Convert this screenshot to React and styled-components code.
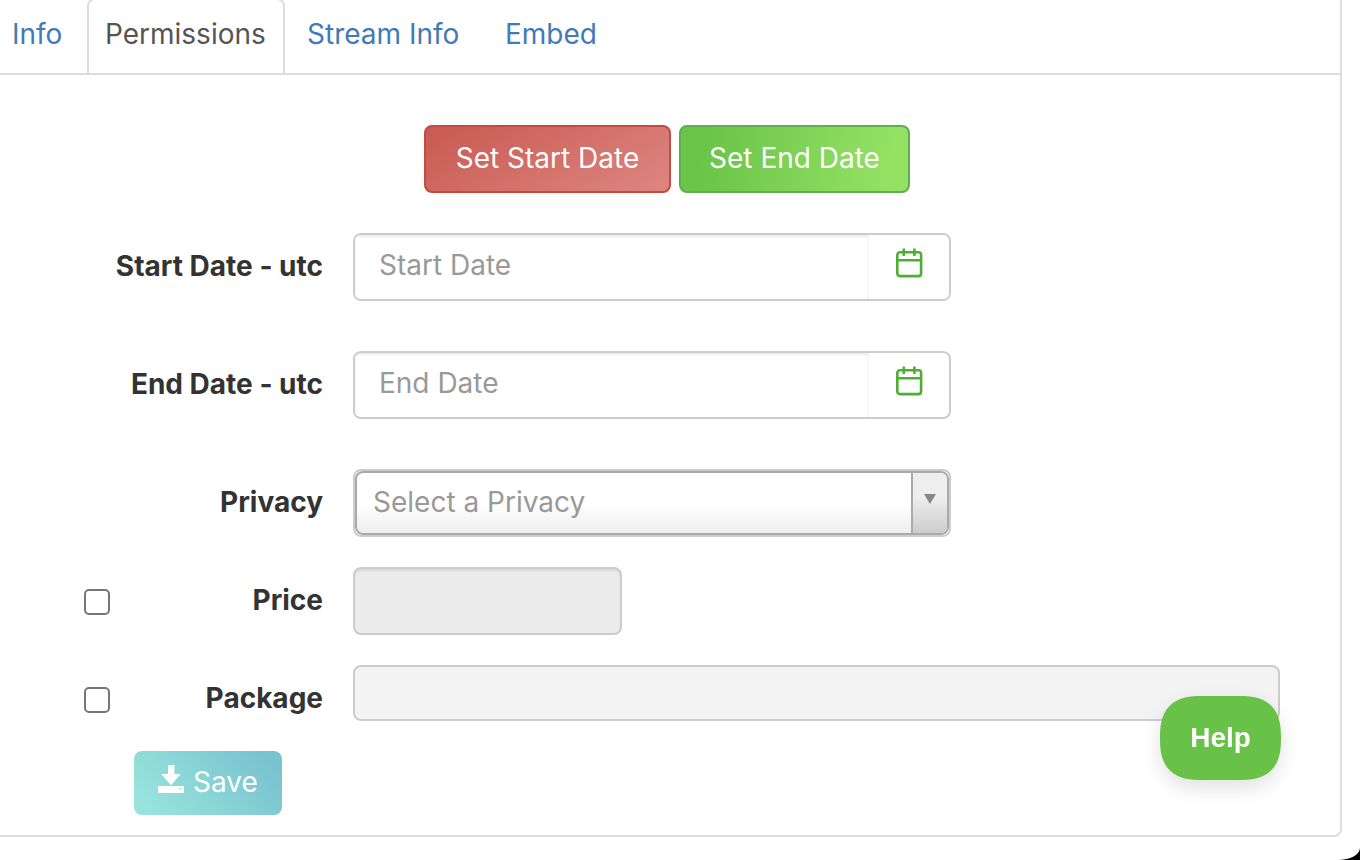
import React from "react";
import styled, { createGlobalStyle, css } from "styled-components";

const GlobalStyle = createGlobalStyle`
  *, *::before, *::after { box-sizing: border-box; }
  html { background: #000; }
  body {
    margin: 0;
    color: #333;
    font-family: Inter, "Open Sans", sans-serif;
    font-size: 28px;
    line-height: 40px;
  }
  button, input, select { font: inherit; color: inherit; margin: 0; }
`;

const Page = styled.div`
  min-height: 100vh;
  overflow: hidden;
  background: #fff;
  border-bottom-right-radius: 22px 12px;
`;

const Panel = styled.main`
  margin-right: 18px;
  border: solid #ddd;
  border-width: 0 2px 2px 0;
  border-bottom-right-radius: 8px;
`;

const Tabs = styled.nav`
  display: flex;
  gap: 4px;
  margin-top: -2px;
  border-bottom: 2px solid #ddd;
`;

const Tab = styled.a`
  display: block;
  min-width: ${(p) => p.$minWidth}px;
  padding: 14px 16px 19px;
  border: 2px solid transparent;
  border-bottom: 0;
  border-radius: 8px 8px 0 0;
  color: #4279b7;
  text-decoration: none;
  &:first-child { padding-left: 10px; }
  ${(p) => p.$active && css`
    color: #555;
    background: #fff;
    border-color: #ddd;
  `}
`;

const Form = styled.form`
  padding: 50px 60px 20px 0;
`;

const DateActions = styled.div`
  display: flex;
  justify-content: center;
  gap: 8px;
  margin-right: -54px;
  margin-bottom: 40px;
`;

const Button = styled.button`
  display: inline-flex;
  align-items: center;
  justify-content: center;
  gap: 9px;
  height: 68px;
  padding: 0 20px 2px;
  border: 2px solid;
  border-radius: 8px;
  color: #fff;
  white-space: nowrap;
`;

const StartButton = styled(Button)`
  min-width: 247px;
  border-color: #c54a42;
  background: linear-gradient(150deg, #c85a52, #dd8680);
`;

const EndButton = styled(Button)`
  min-width: 231px;
  border-color: #5fae52;
  background: linear-gradient(100deg, #69c447 10%, #94e164 90%);
`;

const SaveButton = styled(Button)`
  height: 64px;
  min-width: 148px;
  margin-left: 134px;
  border: 0;
  background: linear-gradient(50deg, #98e3dc 10%, #78c3cf 90%);
  svg { margin-bottom: 6px; }
`;

const Row = styled.div`
  display: grid;
  grid-template-columns: 323px minmax(0, 1fr);
  column-gap: 30px;
  align-items: start;
  margin-bottom: ${(p) => p.$gap}px;
`;

const LabelCell = styled.div`
  display: flex;
  align-items: center;
  justify-content: space-between;
  padding: 13px 0;
  padding-left: 84px;
`;

const Label = styled.label`
  margin-left: auto;
  font-weight: 700;
  white-space: nowrap;
`;

const Checkbox = styled.input`
  appearance: none;
  width: 26px;
  height: 26px;
  margin-top: 4px;
  border: 2px solid #767676;
  border-radius: 5px;
  background: #fff;
  &:checked { background: #69c447; }
`;

const fieldFrame = css`
  border: 2px solid #ccc;
  border-radius: 8px;
`;

const DateField = styled.div`
  ${fieldFrame}
  display: flex;
  max-width: 598px;
  height: 68px;
  overflow: hidden;
`;

const DateInput = styled.input`
  flex: 1;
  min-width: 0;
  padding: 0 24px 4px;
  border: 0;
  outline: 0;
  background: #fff;
  box-shadow: inset 0 2px 2px rgba(0, 0, 0, 0.08);
  &::placeholder { color: #999; opacity: 1; }
`;

const CalendarButton = styled.button`
  display: grid;
  place-items: center;
  width: 81px;
  padding: 0 0 8px;
  border: 0;
  border-left: 1px solid #f4f4f4;
  background: #fff;
`;

const SelectFrame = styled.div`
  ${fieldFrame}
  position: relative;
  max-width: 598px;
  height: 68px;
`;

const Select = styled.select`
  appearance: none;
  display: block;
  width: 100%;
  height: 64px;
  padding: 0 56px 2px 16px;
  border: 2px solid #aaa;
  border-radius: 8px;
  outline: 0;
  color: #999;
  background: linear-gradient(#fff 50%, #eee);
`;

const SelectArrow = styled.span`
  position: absolute;
  top: 2px;
  right: 2px;
  bottom: 2px;
  display: grid;
  place-items: center;
  width: 36px;
  padding-bottom: 8px;
  border-left: 2px solid #aaa;
  border-radius: 0 6px 6px 0;
  background: linear-gradient(#eee 40%, #ccc);
  pointer-events: none;
`;

const PriceInput = styled.input`
  ${fieldFrame}
  display: block;
  width: 269px;
  height: 68px;
  padding: 0 24px;
  background: #ececec;
  box-shadow: inset 0 2px 2px rgba(0, 0, 0, 0.08);
`;

const PackageInput = styled.input`
  ${fieldFrame}
  display: block;
  width: 100%;
  height: 56px;
  padding: 0 24px;
  background: #f3f3f3;
`;

const HelpButton = styled.button`
  position: fixed;
  right: 79px;
  bottom: 80px;
  width: 121px;
  height: 84px;
  padding: 0;
  border: 0;
  border-radius: 42px;
  corner-shape: superellipse(1.4);
  color: #fff;
  background: #69c248;
  box-shadow: 0 8px 20px rgba(0, 0, 0, 0.12);
  font-family: "Liberation Sans", Arial, sans-serif;
  font-size: 28px;
  font-weight: 700;
`;

const CalendarIcon = () => (
  <svg width="28" height="30" viewBox="0 0 28 30" fill="none" stroke="#4caf32" strokeWidth="2.6" aria-hidden="true">
    <rect x="2.3" y="4.3" width="23.8" height="23.8" rx="2.6" />
    <path d="M2.3 12.3h23.8M8.8 0.6v7.4M19.4 0.6v7.4" />
  </svg>
);

const SaveIcon = () => (
  <svg width="26" height="28" viewBox="0 0 26 28" fill="#fff" aria-hidden="true">
    <path d="M10 0h6.4v9h6.2L13 20.2 3.2 9H10z" />
    <path fillRule="evenodd" d="M.8 21h24.4q.8 0 .8.8v5.4q0 .8-.8.8H.8q-.8 0-.8-.8v-5.4q0-.8.8-.8zm20.4 2.2v1.4h2.4v-1.4z" />
  </svg>
);

const tabs = [
  { name: "Info", minWidth: 83 },
  { name: "Permissions", minWidth: 198, active: true },
  { name: "Stream Info", minWidth: 194 },
  { name: "Embed", minWidth: 130 },
];

function DateRow({ id, name }) {
  return (
    <Row $gap={50}>
      <LabelCell><Label htmlFor={id}>{name} - utc</Label></LabelCell>
      <DateField>
        <DateInput id={id} type="text" placeholder={name} />
        <CalendarButton type="button" aria-label={`Pick ${name}`}><CalendarIcon /></CalendarButton>
      </DateField>
    </Row>
  );
}

export default function App() {
  return (
    <Page>
      <GlobalStyle />
      <Panel>
        <Tabs>
          {tabs.map((t) => (
            <Tab key={t.name} href="#" $active={t.active} $minWidth={t.minWidth}>{t.name}</Tab>
          ))}
        </Tabs>
        <Form onSubmit={(e) => e.preventDefault()}>
          <DateActions>
            <StartButton type="button">Set Start Date</StartButton>
            <EndButton type="button">Set End Date</EndButton>
          </DateActions>
          <DateRow id="start" name="Start Date" />
          <DateRow id="end" name="End Date" />
          <Row $gap={30}>
            <LabelCell><Label htmlFor="privacy">Privacy</Label></LabelCell>
            <SelectFrame>
              <Select id="privacy" defaultValue="">
                <option value="">Select a Privacy</option>
              </Select>
              <SelectArrow>
                <svg width="12" height="10" viewBox="0 0 12 10" aria-hidden="true"><path d="M0 0h12L6 10z" fill="#888" /></svg>
              </SelectArrow>
            </SelectFrame>
          </Row>
          <Row $gap={30}>
            <LabelCell>
              <Checkbox type="checkbox" aria-label="Enable price" />
              <Label htmlFor="price">Price</Label>
            </LabelCell>
            <PriceInput id="price" type="text" disabled />
          </Row>
          <Row $gap={20}>
            <LabelCell>
              <Checkbox type="checkbox" aria-label="Enable package" />
              <Label htmlFor="package">Package</Label>
            </LabelCell>
            <PackageInput id="package" type="text" disabled />
          </Row>
          <SaveButton type="submit"><SaveIcon />Save</SaveButton>
        </Form>
      </Panel>
      <HelpButton type="button">Help</HelpButton>
    </Page>
  );
}
